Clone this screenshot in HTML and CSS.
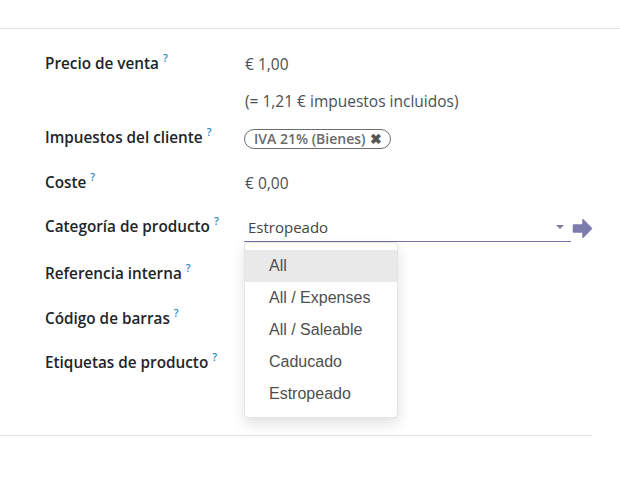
FILE: index.html
```html
<!DOCTYPE html>
<html lang="es">
<head>
<meta charset="utf-8">
<link rel="stylesheet" href="styles.css">
</head>
<body>
<div class="sheet">
  <div class="form">
    <div class="row r37">
      <div class="label">Precio de venta<sup class="help">?</sup></div>
      <div class="value">€ 1,00</div>
    </div>
    <div class="row r37">
      <div class="label"></div>
      <div class="value">(= 1,21 € impuestos incluidos)</div>
    </div>
    <div class="row r45">
      <div class="label">Impuestos del cliente<sup class="help">?</sup></div>
      <div class="value"><span class="tag">IVA 21% (Bienes) <span class="tag-x">✖</span></span></div>
    </div>
    <div class="row r44">
      <div class="label">Coste<sup class="help">?</sup></div>
      <div class="value">€ 0,00</div>
    </div>
    <div class="row r47">
      <div class="label">Categoría de producto<sup class="help">?</sup></div>
      <div class="value">
        <div class="combo">
          <div class="input">
            <span class="input-text">Estropeado</span>
            <span class="caret"></span>
          </div>
          <svg class="goto" width="21" height="21" viewBox="0 0 21 21"><path d="M1.5 7h9.5V1.8L19.5 10.5 11 19.2V14H1.5z" fill="#7c7bad" stroke="#7c7bad" stroke-width="1.5" stroke-linejoin="round"/></svg>
          <ul class="menu">
            <li class="active">All</li>
            <li>All / Expenses</li>
            <li>All / Saleable</li>
            <li>Caducado</li>
            <li>Estropeado</li>
          </ul>
        </div>
      </div>
    </div>
    <div class="row r45">
      <div class="label">Referencia interna<sup class="help">?</sup></div>
      <div class="value"></div>
    </div>
    <div class="row r44">
      <div class="label">Código de barras<sup class="help">?</sup></div>
      <div class="value"></div>
    </div>
    <div class="row r84">
      <div class="label">Etiquetas de producto<sup class="help">?</sup></div>
      <div class="value"></div>
    </div>
  </div>
</div>
</body>
</html>
```

FILE: styles.css
```css
html, body {
  margin: 0;
  padding: 0;
  background: #ffffff;
}
body {
  font-family: "Open Sans", "Noto Sans", sans-serif;
  color: #212529;
}
.sheet {
  padding-top: 28px;
}
.form {
  border-top: 1px solid #dee2e6;
  border-bottom: 1px solid #dee2e6;
  width: 592px;
  padding-top: 23px;
  position: relative;
}
.form::before {
  content: "";
  position: absolute;
  top: -1px;
  left: 592px;
  width: 28px;
  border-top: 1px solid #dee2e6;
}
.row {
  display: grid;
  grid-template-columns: 200px 1fr;
  padding-left: 45px;
  align-items: start;
}
.r37 { height: 37px; }
.r44 { height: 44px; }
.r45 { height: 45px; }
.r47 { height: 47px; }
.r84 { height: 84px; }
.label {
  font-size: 15.3px;
  font-weight: 600;
  line-height: 22px;
  color: #212529;
  white-space: nowrap;
}
.help {
  font-size: 10.5px;
  color: #1f86c4;
  font-weight: 600;
  margin-left: 4px;
  vertical-align: top;
  position: relative;
  top: -5px;
}
.value {
  font-size: 15.5px;
  line-height: 22px;
  color: #4a4f55;
  padding-top: 1px;
}
.tag {
  display: inline-block;
  border: 1.5px solid #6c6c6c;
  border-radius: 11px;
  padding: 0 8px 0 9px;
  line-height: 18px;
  font-size: 14px;
  font-weight: 600;
  color: #6a6a6a;
  margin-left: -1px;
  margin-top: -1px;
}
.tag-x {
  font-size: 13.5px;
  color: #555;
  margin-left: 1px;
}
.combo {
  position: relative;
  display: flex;
  align-items: center;
  width: 348px;
  margin-top: -2px;
}
.input {
  flex: 1;
  display: flex;
  align-items: center;
  justify-content: space-between;
  border-bottom: 1px solid #7370a6;
  padding: 2px 0 3px 4px;
  margin-left: -1px;
  color: #444;
  font-size: 15px;
}
.caret {
  width: 0;
  height: 0;
  border-left: 4px solid transparent;
  border-right: 4px solid transparent;
  border-top: 4px solid #7c7bad;
  margin-right: 7px;
}
.goto {
  margin-left: 1px;
  margin-top: 0px;
}
.menu {
  position: absolute;
  top: 28px;
  left: -1px;
  width: 152px;
  margin: 0;
  padding: 7px 0;
  list-style: none;
  background: #fff;
  border: 1px solid #e4e4e8;
  border-radius: 4px;
  box-shadow: 0 6px 14px rgba(0, 0, 0, 0.12);
  font-family: "Liberation Sans", Arial, sans-serif;
  font-size: 16px;
  color: #4f4f4f;
}
.menu li {
  height: 32px;
  line-height: 32px;
  padding-left: 24px;
}
.menu li.active {
  background: #e9e9e9;
}
```
